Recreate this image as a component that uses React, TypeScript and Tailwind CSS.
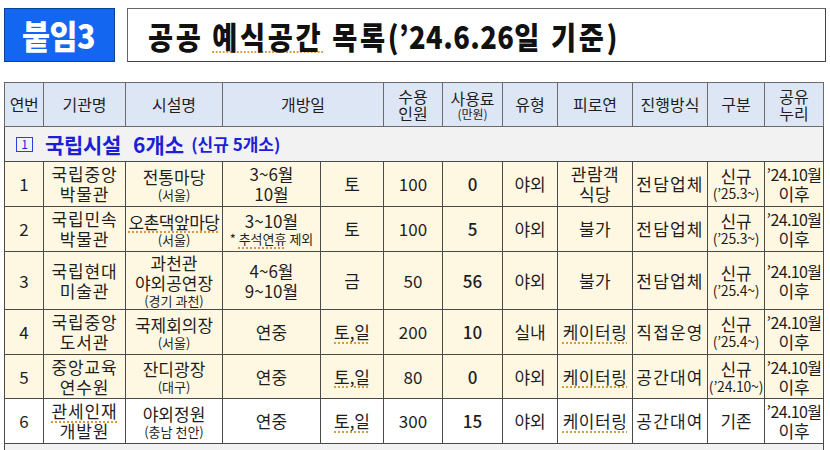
import React from "react";

const U = ({ children }: { children: React.ReactNode }) => (
  <span className="underline decoration-dotted decoration-[#d89a3c] decoration-[1.5px] underline-offset-[3px]">
    {children}
  </span>
);

type Row = {
  no: string;
  org: React.ReactNode;
  fac: React.ReactNode;
  period: React.ReactNode;
  day: React.ReactNode;
  cap: string;
  fee: string;
  type: string;
  party: React.ReactNode;
  mode: string;
  kind: React.ReactNode;
  share: React.ReactNode;
  h: string;
  bg: string;
};

const Sub = ({ children }: { children: React.ReactNode }) => (
  <div className="text-[13px] leading-[15px]">{children}</div>
);

const Kind = ({ d }: { d: string }) => (
  <div className="flex flex-col items-center">
    <div className="leading-[18px]">신규</div>
    <div className="text-[14px] leading-[16px] tracking-[-0.2px] whitespace-nowrap">{d}</div>
  </div>
);

const Share = () => (
  <div className="flex flex-col items-center leading-[19px]">
    <div className="text-[16px] tracking-[-0.6px] whitespace-nowrap">’24.10월</div>
    <div>이후</div>
  </div>
);

const rows: Row[] = [
  {
    no: "1",
    org: (<><div>국립중앙</div><div>박물관</div></>),
    fac: (<><div>전통마당</div><Sub>(서울)</Sub></>),
    period: (<><div>3~6월</div><div>10월</div></>),
    day: "토",
    cap: "100",
    fee: "0",
    type: "야외",
    party: (<><div>관람객</div><div>식당</div></>),
    mode: "전담업체",
    kind: <Kind d="(’25.3~)" />,
    share: <Share />,
    h: "h-[45px]",
    bg: "bg-[#fef8e3]",
  },
  {
    no: "2",
    org: (<><div>국립민속</div><div>박물관</div></>),
    fac: (<><div className="tracking-[-0.5px] whitespace-nowrap"><U>오촌댁앞마당</U></div><Sub>(서울)</Sub></>),
    period: (<><div>3~10월</div><div className="text-[13px] leading-[16px] whitespace-nowrap">* <U>추석연휴</U> 제외</div></>),
    day: "토",
    cap: "100",
    fee: "5",
    type: "야외",
    party: "불가",
    mode: "전담업체",
    kind: <Kind d="(’25.3~)" />,
    share: <Share />,
    h: "h-[45px]",
    bg: "bg-[#fef8e3]",
  },
  {
    no: "3",
    org: (<><div>국립현대</div><div>미술관</div></>),
    fac: (<><div>과천관</div><div>야외공연장</div><Sub>(경기 과천)</Sub></>),
    period: (<><div>4~6월</div><div>9~10월</div></>),
    day: "금",
    cap: "50",
    fee: "56",
    type: "야외",
    party: "불가",
    mode: "전담업체",
    kind: <Kind d="(’25.4~)" />,
    share: <Share />,
    h: "h-[58px]",
    bg: "bg-[#fef8e3]",
  },
  {
    no: "4",
    org: (<><div>국립중앙</div><div>도서관</div></>),
    fac: (<><div>국제회의장</div><Sub>(서울)</Sub></>),
    period: "연중",
    day: <U>토,일</U>,
    cap: "200",
    fee: "10",
    type: "실내",
    party: <U>케이터링</U>,
    mode: "직접운영",
    kind: <Kind d="(’25.4~)" />,
    share: <Share />,
    h: "h-[45px]",
    bg: "bg-[#fef8e3]",
  },
  {
    no: "5",
    org: (<><div>중앙교육</div><div>연수원</div></>),
    fac: (<><div>잔디광장</div><Sub>(대구)</Sub></>),
    period: "연중",
    day: <U>토,일</U>,
    cap: "80",
    fee: "0",
    type: "야외",
    party: <U>케이터링</U>,
    mode: "공간대여",
    kind: <Kind d="(’24.10~)" />,
    share: <Share />,
    h: "h-[44px]",
    bg: "bg-[#fef8e3]",
  },
  {
    no: "6",
    org: (<><div><U>관세인재</U></div><div>개발원</div></>),
    fac: (<><div>야외정원</div><Sub>(충남 천안)</Sub></>),
    period: "연중",
    day: <U>토,일</U>,
    cap: "300",
    fee: "15",
    type: "야외",
    party: <U>케이터링</U>,
    mode: "공간대여",
    kind: "기존",
    share: <Share />,
    h: "h-[45px]",
    bg: "bg-white",
  },
];

const td = "border border-[#4a4a4a] text-center align-middle p-0 overflow-visible";
const th = "border border-[#6a6a6a] text-center align-middle p-0 font-normal";

export default function App() {
  return (
    <div className="w-[830px] h-[450px] overflow-hidden bg-white text-[#1e1e1e] font-['Noto_Sans_CJK_KR',sans-serif]">
      <div className="flex items-stretch pt-[8px] pl-[4px]">
        <div className="w-[111px] h-[54px] bg-[#1266f0] border border-[#0c3f99] flex items-center pl-[17px]">
          <span className="inline-block origin-left scale-x-[0.92] text-white text-[33px] font-black tracking-[-0.5px] leading-none">붙임3</span>
        </div>
        <div className="ml-[12px] w-[699px] h-[54px] border border-[#666] border-b-[#444] border-r-[#444] flex items-center pl-[20px]">
          <span className="inline-block origin-left scale-x-[0.88] text-[31px] font-black tracking-[3px] leading-none text-[#111] whitespace-nowrap">
            공공 <U>예식공간</U> 목록<span className="tracking-[0.5px]">(’24.6.26</span>일 기준)
          </span>
        </div>
      </div>

      <table className="mt-[20px] ml-[4px] w-[819px] table-fixed border-collapse text-[17px] leading-[20px]">
        <colgroup>
          <col className="w-[39px]" />
          <col className="w-[82px]" />
          <col className="w-[97px]" />
          <col className="w-[98px]" />
          <col className="w-[63px]" />
          <col className="w-[59px]" />
          <col className="w-[60px]" />
          <col className="w-[55px]" />
          <col className="w-[75px]" />
          <col className="w-[75px]" />
          <col className="w-[57px]" />
          <col className="w-[59px]" />
        </colgroup>
        <thead>
          <tr className="h-[44px] bg-[#dde6f5] text-[16px] leading-[17px]">
            <th className={th + " tracking-[-0.5px]"}>연번</th>
            <th className={th}>기관명</th>
            <th className={th}>시설명</th>
            <th className={th} colSpan={2}>개방일</th>
            <th className={th}><div>수용</div><div>인원</div></th>
            <th className={th}>
              <div className="leading-[18px]">사용료</div>
              <div className="text-[12px] leading-[14px]">(만원)</div>
            </th>
            <th className={th}>유형</th>
            <th className={th}>피로연</th>
            <th className={th + " whitespace-nowrap"}>진행방식</th>
            <th className={th}>구분</th>
            <th className={th}><div>공유</div><div>누리</div></th>
          </tr>
        </thead>
        <tbody>
          <tr className="h-[35px] bg-[#f2f2f2]">
            <td className={td + " text-left"} colSpan={12}>
              <div className="flex items-center pl-[11px] text-[#1d1fd8] font-bold whitespace-nowrap">
                <span className="w-[17px] h-[15px] border-[1.5px] border-[#2b3ee0] flex items-center justify-center text-[12px] font-normal leading-none mr-[12px]">
                  1
                </span>
                <span className="text-[21px] tracking-[-0.3px]">국립시설</span>
                <span className="text-[21px] ml-[12px]">6개소</span>
                <span className="text-[17px] ml-[7px]">(신규 5개소)</span>
              </div>
            </td>
          </tr>
          {rows.map((r) => (
            <tr key={r.no} className={r.h + " " + r.bg}>
              <td className={td}>{r.no}</td>
              <td className={td + " tracking-[0.8px]"}>{r.org}</td>
              <td className={td}>{r.fac}</td>
              <td className={td}>{r.period}</td>
              <td className={td}>{r.day}</td>
              <td className={td}>{r.cap}</td>
              <td className={td + " font-medium"}>{r.fee}</td>
              <td className={td}>{r.type}</td>
              <td className={td + " tracking-[0.5px] whitespace-nowrap"}>{r.party}</td>
              <td className={td + " tracking-[1.2px] whitespace-nowrap"}>{r.mode}</td>
              <td className={td}>{r.kind}</td>
              <td className={td}>{r.share}</td>
            </tr>
          ))}
          <tr className="h-[35px] bg-[#f2f2f2]">
            <td className={td + " text-left align-top"} colSpan={12}>
              <div className="flex items-center pt-[10px] pl-[11px] text-[#1d1fd8] font-bold whitespace-nowrap">
                <span className="w-[17px] h-[15px] border-[1.5px] border-[#2b3ee0] flex items-center justify-center text-[12px] font-normal leading-none mr-[12px]">
                  2
                </span>
                <span className="text-[21px] tracking-[-0.3px]">지자체 시설</span>
              </div>
            </td>
          </tr>
        </tbody>
      </table>
    </div>
  );
}
